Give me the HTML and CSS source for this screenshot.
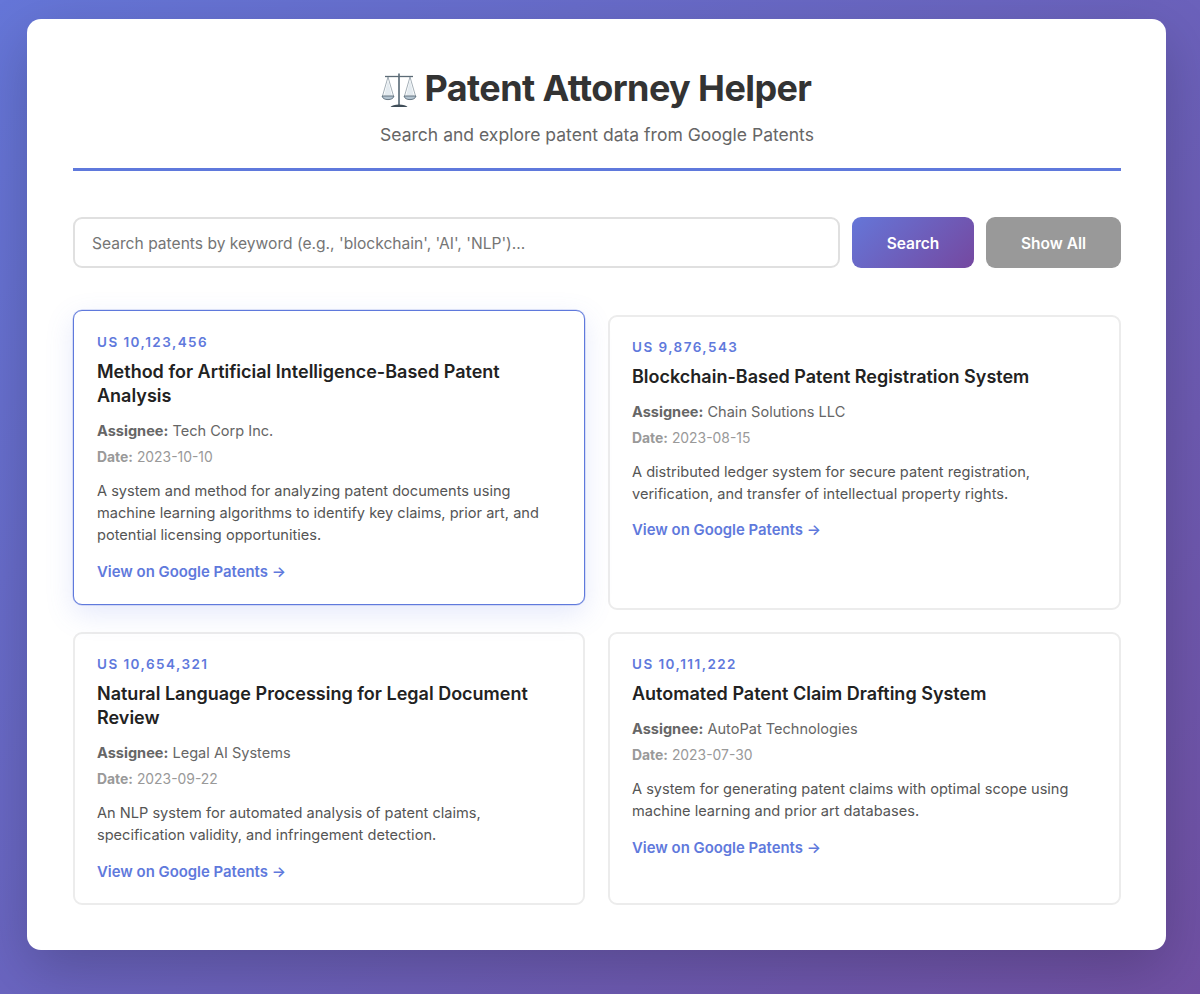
FILE: index.html
```html
<!DOCTYPE html>
<html lang="en">

<head>
  <meta charset="UTF-8">
  <meta name="viewport" content="width=device-width, initial-scale=1.0">
  <title>Patent Attorney Helper</title>
  <link rel="stylesheet" href="styles.css">
</head>

<body>
  <div class="container">
    <header class="header">
      <h1 class="title">
        <svg class="scales" viewBox="0 0 36 36" width="36" height="36" aria-hidden="true">
          <path d="M18 1.500V33" stroke="#77858f" stroke-width="2" fill="none" />
          <path d="M4 4.500h28" stroke="#5c6b76" stroke-width="1.300" fill="none" />
          <path d="M7 5 1.500 24M7 5l5.500 19M29 5l-5.500 19M29 5l5.500 19" stroke="#7d8c98" stroke-width=".7" fill="none" />
          <path d="M7 8 3 24h8ZM29 8l-4 16h8Z" fill="#e4ebf0" />
          <path d="M1 24h12c-.6 2.600-3 3.600-6 3.600S1.600 26.600 1 24Z" fill="#b4c4d0" stroke="#4e606d" stroke-width=".8" />
          <path d="M23 24h12c-.6 2.600-3 3.600-6 3.600s-5.400-1-6-3.600Z" fill="#b4c4d0" stroke="#4e606d" stroke-width=".8" />
          <path d="M9.500 35c1-1.800 4.500-2.600 8.500-2.600s7.500.8 8.500 2.600Z" fill="#3f4d58" />
        </svg>
        Patent Attorney Helper
      </h1>
      <p class="subtitle">Search and explore patent data from Google Patents</p>
    </header>

    <div class="search-row">
      <input class="search-input" type="text" placeholder="Search patents by keyword (e.g., 'blockchain', 'AI', 'NLP')...">
      <button class="btn btn-search">Search</button>
      <button class="btn btn-all">Show All</button>
    </div>

    <div class="results">
      <div class="card card-hover">
        <div class="number">US 10,123,456</div>
        <h3 class="card-title">Method for Artificial Intelligence-Based Patent Analysis</h3>
        <div class="assignee"><strong>Assignee:</strong> Tech Corp Inc.</div>
        <div class="date"><strong>Date:</strong> 2023-10-10</div>
        <p class="abstract">A system and method for analyzing patent documents using machine learning algorithms to identify key claims, prior art, and potential licensing opportunities.</p>
        <a class="link" href="#">View on Google Patents →</a>
      </div>

      <div class="card">
        <div class="number">US 9,876,543</div>
        <h3 class="card-title">Blockchain-Based Patent Registration System</h3>
        <div class="assignee"><strong>Assignee:</strong> Chain Solutions LLC</div>
        <div class="date"><strong>Date:</strong> 2023-08-15</div>
        <p class="abstract">A distributed ledger system for secure patent registration, verification, and transfer of intellectual property rights.</p>
        <a class="link" href="#">View on Google Patents →</a>
      </div>

      <div class="card">
        <div class="number">US 10,654,321</div>
        <h3 class="card-title">Natural Language Processing for Legal Document Review</h3>
        <div class="assignee"><strong>Assignee:</strong> Legal AI Systems</div>
        <div class="date"><strong>Date:</strong> 2023-09-22</div>
        <p class="abstract">An NLP system for automated analysis of patent claims, specification validity, and infringement detection.</p>
        <a class="link" href="#">View on Google Patents →</a>
      </div>

      <div class="card">
        <div class="number">US 10,111,222</div>
        <h3 class="card-title">Automated Patent Claim Drafting System</h3>
        <div class="assignee"><strong>Assignee:</strong> AutoPat Technologies</div>
        <div class="date"><strong>Date:</strong> 2023-07-30</div>
        <p class="abstract">A system for generating patent claims with optimal scope using machine learning and prior art databases.</p>
        <a class="link" href="#">View on Google Patents →</a>
      </div>
    </div>
  </div>
</body>

</html>
```

FILE: styles.css
```css
* {
  box-sizing: border-box;
}

body {
  margin: 0;
  min-height: 994px;
  padding: 19px 34px 44px 27px;
  font-family: Inter, "Liberation Sans", sans-serif;
  background: linear-gradient(135deg, #6576d8 0%, #7050a3 100%);
}

.container {
  background: #fff;
  border-radius: 14px;
  padding: 46px 45px 46px 46px;
  height: 931px;
  box-shadow: 0 19px 57px rgba(0, 0, 0, 0.2);
}

.header {
  text-align: center;
  padding-bottom: 22px;
  border-bottom: 3px solid #5f79dc;
  margin-bottom: 46px;
}

.title {
  margin: 0 0 13px;
  padding-right: 2px;
  font-size: 36px;
  line-height: 46px;
  font-weight: 700;
  letter-spacing: -0.6px;
  color: #333;
}

.scales {
  vertical-align: -7px;
}

.subtitle {
  margin: 0;
  font-size: 17.550px;
  line-height: 22px;
  color: #666;
}

.search-row {
  display: flex;
  gap: 12px;
  margin-bottom: 47px;
}

.search-input {
  flex: 1;
  height: 51px;
  padding: 1px 17px 0;
  border: 2px solid #e0e0e0;
  border-radius: 9px;
  font-family: inherit;
  font-size: 15.600px;
  color: #333;
}

.search-input::placeholder {
  color: #757575;
}

.btn {
  height: 51px;
  padding: 1px 0 0;
  border: 0;
  border-radius: 9px;
  color: #fff;
  font-family: inherit;
  font-size: 15.500px;
  font-weight: 600;
}

.btn-search {
  width: 122px;
  background: linear-gradient(135deg, #6576d8 0%, #7548a0 100%);
}

.btn-all {
  width: 135px;
  background: #999;
}

.results {
  display: grid;
  grid-template-columns: 512px 1fr;
  gap: 22.500px 23px;
}

.card {
  display: flex;
  flex-direction: column;
  align-items: flex-start;
  padding: 21px 22px;
  border: 2px solid #ececec;
  border-radius: 9px;
  background: #fff;
}

/* first card is caught in its hover state */
.card-hover {
  transform: translateY(-5px);
  padding: 22px 23px;
  border: 1px solid #5f79dc;
  box-shadow: 0 0 0 0.5px rgba(95, 121, 220, 0.4), 0 9px 28px rgba(102, 126, 234, 0.17);
}

.number {
  font-size: 13.500px;
  line-height: 18px;
  font-weight: 600;
  letter-spacing: 1.450px;
  color: #5f79dc;
  margin-bottom: 9px;
}

.card-title {
  margin: 0 0 13.500px;
  font-size: 18px;
  line-height: 24px;
  font-weight: 600;
  color: #222;
}

.assignee {
  font-size: 14.550px;
  line-height: 19px;
  color: #666;
  margin-bottom: 7.500px;
}

.date {
  font-size: 13.900px;
  line-height: 18px;
  color: #999;
  margin-bottom: 13.500px;
}

.abstract {
  margin: 0 0 16.400px;
  font-size: 14.580px;
  line-height: 22.300px;
  color: #555;
}

.link {
  font-size: 14.900px;
  line-height: 19px;
  font-weight: 600;
  color: #5f79dc;
  text-decoration: none;
}
```
